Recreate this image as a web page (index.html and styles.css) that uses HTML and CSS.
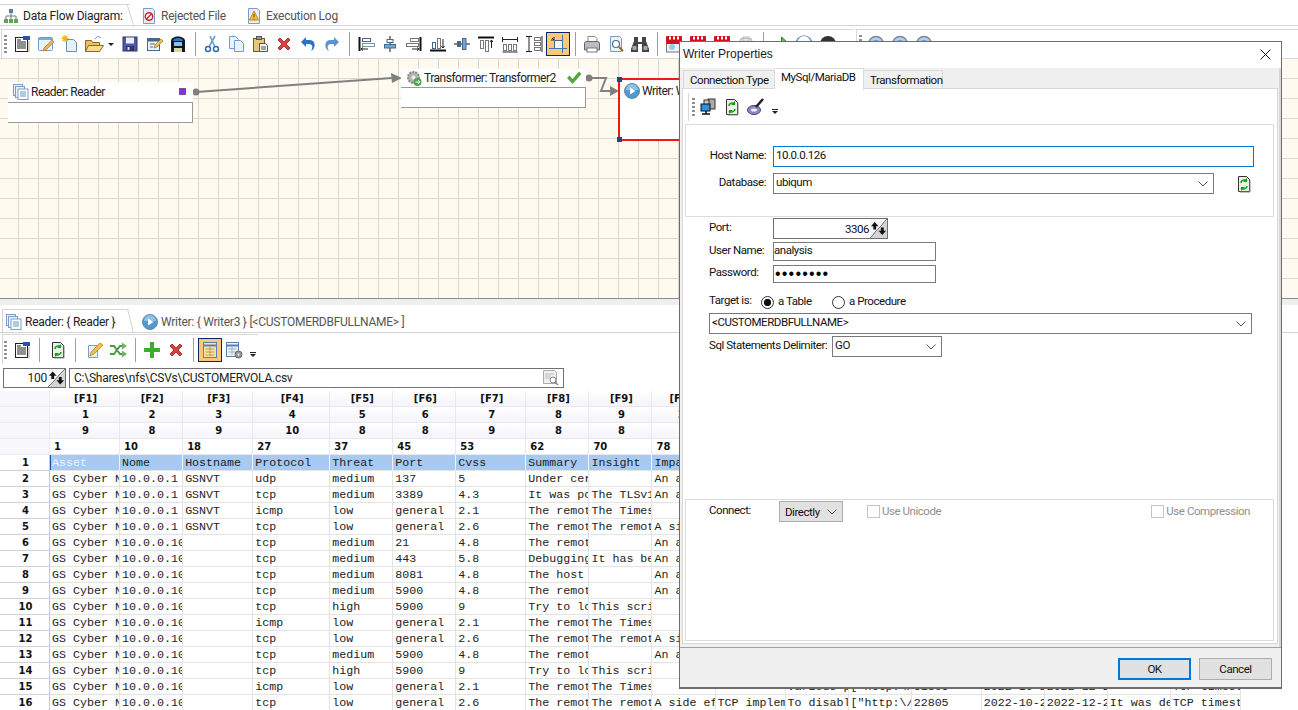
FILE: index.html
```html
<!DOCTYPE html>
<html lang="en">
<head>
  <meta charset="UTF-8" />
  <title>Data Flow Diagram</title>
  <link rel="stylesheet" href="styles.css">
</head>
<body>
  <!-- icon sheet -->
  <svg class="icon-sheet" xmlns="http://www.w3.org/2000/svg">
    <symbol id="i-org" viewBox="0 0 16 16"><rect x="6" y="1" width="4" height="4" fill="#4a7fc0"/><path d="M8 5v3M3 11V8h10v3M8 8v3" stroke="#777" fill="none"/><rect x="1" y="11" width="4" height="4" fill="#5aa84a"/><rect x="6" y="11" width="4" height="4" fill="#5aa84a"/><rect x="11" y="11" width="4" height="4" fill="#5aa84a"/></symbol>
    <symbol id="i-rejected" viewBox="0 0 16 16"><path d="M2.500 .5h9l2 2v13h-11z" fill="#e8eef8" stroke="#7d9cc8"/><circle cx="8" cy="8.500" r="3.700" fill="#fff" stroke="#d2242a" stroke-width="1.500"/><path d="M5.500 11l5-5" stroke="#d2242a" stroke-width="1.500"/></symbol>
    <symbol id="i-log" viewBox="0 0 16 16"><path d="M2.500 .5h9l2 2v13h-11z" fill="#e8eef8" stroke="#7d9cc8"/><path d="M8 3l4.500 9h-9z" fill="#f5c83c" stroke="#c08a10"/><path d="M8 6v3.500M8 10.500v1" stroke="#7a3a00"/></symbol>
    <symbol id="i-props" viewBox="0 0 20 20"><rect x="3.500" y="3.500" width="12" height="14" fill="#fff" stroke="#222"/><path d="M5 6h4M5 8h9M5 10h9M5 12h9M5 14h9" stroke="#222"/><rect x="11" y="2" width="7" height="4" fill="#2a52a8"/><path d="M16 7h2v11h-2z" fill="#d8d0c0"/></symbol>
    <symbol id="i-edit" viewBox="0 0 20 20"><rect x="2.500" y="3.500" width="14" height="13" rx="1" fill="#eaf2fb" stroke="#6f9bd0"/><path d="M3 4h13v2H3z" fill="#7fa8dc"/><path d="M7 17l1-3 8-8 2 2-8 8z" fill="#f2b04a" stroke="#b87a20" stroke-width=".7"/></symbol>
    <symbol id="i-new" viewBox="0 0 20 20"><path d="M6.500 5.500h7l3 3v9h-10z" fill="#e4f0fb" stroke="#6f8fb0"/><path d="M5 1v7M1.500 4.500h7M2.500 2l5 5M7.500 2l-5 5" stroke="#f0b020" stroke-width="1.200"/></symbol>
    <symbol id="i-open" viewBox="0 0 20 20"><path d="M1.500 17.500V6.500h6l1 2h7v9z" fill="#e8c060" stroke="#8a6a20"/><path d="M1.500 17.500l3-6h15l-4 6z" fill="#f6dc90" stroke="#8a6a20"/><path d="M11 5c2-3 4-3 6-1" stroke="#6f8fb0" fill="none"/></symbol>
    <symbol id="i-save" viewBox="0 0 20 20"><rect x="3" y="3" width="14" height="14" fill="#5058a8" stroke="#30346c"/><rect x="6" y="3.500" width="8" height="6" fill="#eef"/><rect x="6" y="12" width="8" height="5" fill="#30346c"/><rect x="7.500" y="13" width="2" height="3" fill="#dde"/></symbol>
    <symbol id="i-saveas" viewBox="0 0 20 20"><rect x="3.500" y="4.500" width="12" height="12" fill="#eef2f8" stroke="#46688c"/><path d="M3.500 4.500h12v3h-12z" fill="#46688c"/><path d="M6 10h5M6 13h3" stroke="#46688c"/><path d="M10 14l1-3 6-6 2 2-6 6z" fill="#f2c04a" stroke="#8a6a20" stroke-width=".6"/></symbol>
    <symbol id="i-dbsave" viewBox="0 0 20 20"><path d="M3 7c0-6 14-6 14 0v11H3z" fill="#101820"/><path d="M5 7c0-4 10-4 10 0z" fill="#2a78c8"/><rect x="6" y="8" width="8" height="4" fill="#8cc0ee"/><rect x="6" y="14" width="8" height="4" fill="#d8d8a0"/></symbol>
    <symbol id="i-cut" viewBox="0 0 20 20"><path d="M13 2L7 13M8 2l5 11" stroke="#6d9fcc" stroke-width="1.600"/><circle cx="6" cy="15" r="2.500" fill="none" stroke="#2f6cb0" stroke-width="1.500"/><circle cx="14" cy="15" r="2.500" fill="none" stroke="#2f6cb0" stroke-width="1.500"/></symbol>
    <symbol id="i-copy" viewBox="0 0 20 20"><path d="M3.500 2.500h6l3 3v9h-9z" fill="#eaf2fb" stroke="#6f9bd0"/><path d="M8.500 6.500h6l3 3v8h-9z" fill="#eaf2fb" stroke="#6f9bd0"/></symbol>
    <symbol id="i-paste" viewBox="0 0 20 20"><rect x="3.500" y="4.500" width="11" height="13" fill="#e8c878" stroke="#6a5a30"/><rect x="6.500" y="2.500" width="5" height="3" fill="#999" stroke="#555"/><path d="M9.500 9.500h6l2 2v6h-8z" fill="#f4f4f4" stroke="#555"/><path d="M11 13h5M11 15h5" stroke="#555"/></symbol>
    <symbol id="i-del" viewBox="0 0 20 20"><path d="M4 6l2-2 4 4 4-4 2 2-4 4 4 4-2 2-4-4-4 4-2-2 4-4z" fill="#d64545" stroke="#b03030"/></symbol>
    <symbol id="i-undo" viewBox="0 0 20 20"><path d="M7 5h4c6 0 6 9 1 11 2-3 2-7-2-7H7v3L2 7l5-5z" fill="#2f73c0" transform="translate(1 1)"/></symbol>
    <symbol id="i-redo" viewBox="0 0 20 20"><path d="M13 5H9c-6 0-6 9-1 11-2-3-2-7 2-7h3v3l5-5-5-5z" fill="#5a93d4" transform="translate(-1 1)"/></symbol>
    <symbol id="i-al" viewBox="0 0 20 20"><path d="M3.500 3v14" stroke="#111" stroke-width="2"/><rect x="6.500" y="4.500" width="8" height="3" fill="#fff" stroke="#46688c"/><rect x="6.500" y="9.500" width="12" height="3" fill="#fff" stroke="#46688c" opacity=".7"/><path d="M5 15h7M5 15l2-1.500M5 15l2 1.500" stroke="#222" fill="none"/></symbol>
    <symbol id="i-ac" viewBox="0 0 20 20"><path d="M10 2v16" stroke="#111"/><rect x="7" y="5.500" width="6" height="3" fill="#fff" stroke="#46688c"/><rect x="4.500" y="10.500" width="11" height="3.500" fill="#7ba5d4" stroke="#46688c"/></symbol>
    <symbol id="i-ar" viewBox="0 0 20 20"><path d="M16.500 3v14" stroke="#111" stroke-width="2"/><rect x="6.500" y="4.500" width="8" height="3" fill="#fff" stroke="#777"/><rect x="2.500" y="9.500" width="12" height="3" fill="#fff" stroke="#777"/><path d="M8 15h7M15 15l-2-1.500M15 15l-2 1.500" stroke="#222" fill="none"/></symbol>
    <symbol id="i-ab" viewBox="0 0 20 20"><path d="M2 16.500h16" stroke="#111" stroke-width="2"/><rect x="4.500" y="8.500" width="3" height="6" fill="#fff" stroke="#46688c"/><rect x="9.500" y="4.500" width="3" height="10" fill="#fff" stroke="#777"/><path d="M15 5v9M15 14l-1.500-2M15 14l1.500-2" stroke="#222" fill="none"/></symbol>
    <symbol id="i-am" viewBox="0 0 20 20"><path d="M2 10h16" stroke="#111"/><rect x="5.500" y="7.500" width="3" height="5" fill="#46688c" stroke="#46688c"/><rect x="10.500" y="4.500" width="3.500" height="11" fill="#7ba5d4" stroke="#46688c"/></symbol>
    <symbol id="i-at" viewBox="0 0 20 20"><path d="M2 3.500h16" stroke="#111" stroke-width="2"/><rect x="4.500" y="6.500" width="3" height="8" fill="#fff" stroke="#777"/><rect x="9.500" y="6.500" width="3" height="11" fill="#fff" stroke="#777"/><path d="M15.500 14V6M15.500 6L14 8M15.500 6L17 8" stroke="#222" fill="none"/></symbol>
    <symbol id="i-eh" viewBox="0 0 20 20"><path d="M2.500 3v5M17.500 3v5M3 5.500h14" stroke="#222"/><rect x="3.500" y="10.500" width="3" height="6" fill="#fff" stroke="#777"/><rect x="8.500" y="10.500" width="3" height="6" fill="#fff" stroke="#777"/><rect x="13.500" y="10.500" width="3" height="6" fill="#fff" stroke="#777"/><path d="M2.500 18h15" stroke="#222"/></symbol>
    <symbol id="i-ev" viewBox="0 0 20 20"><path d="M2 2.500h6M2 17.500h6M5 3v14" stroke="#222"/><rect x="10.500" y="3.500" width="6" height="3" fill="#fff" stroke="#777"/><rect x="10.500" y="8.500" width="6" height="3" fill="#fff" stroke="#777"/><rect x="10.500" y="13.500" width="6" height="3" fill="#fff" stroke="#777"/><path d="M18 2v16" stroke="#222"/></symbol>
    <symbol id="i-fit" viewBox="0 0 20 20"><rect x="6.500" y="6.500" width="8" height="8" fill="#f4f4f4" stroke="#46688c"/><path d="M1 14.500h18M14.500 1v18" stroke="#3f76b8"/><path d="M3 6h3M6 3v3M4 4l2 2" stroke="#222"/></symbol>
    <symbol id="i-print" viewBox="0 0 20 20"><path d="M6 2.500h7l2 2v5H6z" fill="#fff" stroke="#888"/><path d="M2.500 10c0-2 1-2.500 2-2.500h11c1 0 2 .5 2 2.500v6h-15z" fill="#b8bcc4" stroke="#666"/><rect x="5" y="14" width="10" height="4" fill="#fff" stroke="#777"/></symbol>
    <symbol id="i-preview" viewBox="0 0 20 20"><path d="M4.500 2.500h9l2 2v13h-11z" fill="#eaf2fb" stroke="#7d9cc8"/><circle cx="10" cy="10" r="3.500" fill="#fff" stroke="#5a6a80" stroke-width="1.200"/><path d="M13 13l4 4" stroke="#8a6a20" stroke-width="2"/></symbol>
    <symbol id="i-bino" viewBox="0 0 20 20"><path d="M4 3h4v5h4V3h4v4l3 8v3h-7V10H8v8H1v-3l3-8z" fill="#444"/><rect x="2.500" y="12" width="4" height="4" fill="#a8a8a8"/><rect x="13.500" y="12" width="4" height="4" fill="#a8a8a8"/></symbol>
    <symbol id="i-cal" viewBox="0 0 20 20"><rect x="2.500" y="4" width="15" height="14" fill="#eef2f8" stroke="#777"/><rect x="2" y="2" width="16" height="8" rx="1" fill="#d60f18"/><path d="M6 2.500v3M10 2.500v3M14 2.500v3" stroke="#fff" stroke-width="2"/><circle cx="8" cy="13" r="3" fill="#9cc8ee"/></symbol>
    <symbol id="i-gray" viewBox="0 0 20 20"><rect x="4.500" y="4.500" width="11" height="13" rx="2" fill="#f4f4f4" stroke="#bbb" stroke-width="1.500"/><rect x="7" y="3" width="6" height="4" fill="none" stroke="#bbb"/></symbol>
    <symbol id="i-run" viewBox="0 0 20 20"><path d="M2.500 7.500h9V3l7 6.500-7 6.500v-4.500h-9z" fill="#6cc060" stroke="#1a8a20"/></symbol>
    <symbol id="i-dome" viewBox="0 0 20 20"><circle cx="10" cy="10" r="8" fill="#dbe8f8" stroke="#6f8fc0" stroke-width="1.500"/><path d="M4 8a6 6 0 0 1 12 0z" fill="#f8fbff"/></symbol>
    <symbol id="i-domedark" viewBox="0 0 20 20"><circle cx="10" cy="10" r="8" fill="#333"/></symbol>
    <symbol id="i-domeb" viewBox="0 0 20 20"><circle cx="10" cy="10" r="7.500" fill="#b8cce8" stroke="#7a8a9c" stroke-width="1.500"/><path d="M5 11a5 5 0 0 1 10 0z" fill="#6f9bd8"/></symbol>
    <symbol id="i-refresh" viewBox="0 0 20 20"><path d="M4.500 2.500h8l3 3v12h-11z" fill="#eef0e8" stroke="#333"/><path d="M7 9c0-3 4-4 6-2M13 12c0 3-4 4-6 2" stroke="#0ea018" stroke-width="1.500" fill="none"/><path d="M13 4v4h-4zM7 17v-4h4z" fill="#0ea018"/><path d="M16 6v12H6" stroke="#888" fill="none"/></symbol>
    <symbol id="i-pendoc" viewBox="0 0 20 20"><path d="M4.500 5.500h9v12h-9z" fill="#eaf2fb" stroke="#7d9cc8"/><path d="M6 16l1-4 9-9 3 2-9 9z" fill="#f2c04a" stroke="#b08020" stroke-width=".7"/></symbol>
    <symbol id="i-shuffle" viewBox="0 0 20 20"><path d="M2 6h4l6 8h3M2 14h4l6-8h3" stroke="#4a9a44" stroke-width="2" fill="none"/><path d="M14 2.500L19 6l-5 3.500zM14 10.500l5 3.500-5 3.500z" fill="#6cb860"/></symbol>
    <symbol id="i-plus" viewBox="0 0 20 20"><path d="M8 2h4v6h6v4h-6v6H8v-6H2V8h6z" fill="#3eaa2e"/></symbol>
    <symbol id="i-table" viewBox="0 0 20 20"><rect x="3.500" y="2.500" width="13" height="15" fill="#fbe3a8" stroke="#5d7eb0"/><path d="M3.500 5.500h13" stroke="#5d7eb0" stroke-width="2"/><path d="M5.500 9h9M5.500 12h9M5.500 15h9M10 7v9" stroke="#c09a50"/></symbol>
    <symbol id="i-tablegear" viewBox="0 0 20 20"><rect x="2.500" y="2.500" width="12" height="14" fill="#eef2f8" stroke="#5d7eb0"/><path d="M2.500 5.500h12" stroke="#5d7eb0" stroke-width="2"/><path d="M4.500 9h8M4.500 12h8M8 7v8" stroke="#9cb0cc"/><circle cx="14.500" cy="14.500" r="3.500" fill="#9a9a9a" stroke="#666"/><circle cx="14.500" cy="14.500" r="1" fill="#eee"/></symbol>
    <symbol id="i-network" viewBox="0 0 20 20"><rect x="10" y="2" width="7" height="10" fill="#aaa" stroke="#333"/><rect x="6" y="3" width="5" height="7" fill="#ccc" stroke="#333"/><rect x="3" y="7" width="9" height="7" fill="#2f8fe0" stroke="#111"/><path d="M4 17h8M8 14v3" stroke="#111" stroke-width="1.500"/></symbol>
    <symbol id="i-brush" viewBox="0 0 20 20"><ellipse cx="8" cy="13" rx="6.500" ry="4.500" fill="#8a8ad0" stroke="#445"/><ellipse cx="8" cy="13" rx="3" ry="1.500" fill="#eef"/><path d="M10 10l7-8" stroke="#222" stroke-width="2.500"/></symbol>
    <symbol id="i-reader" viewBox="0 0 16 16"><rect x=".5" y=".5" width="9" height="11" fill="#eaf2fb" stroke="#7d9cc8"/><rect x="2.500" y="2.500" width="9" height="11" fill="#eaf2fb" stroke="#7d9cc8"/><rect x="5" y="5" width="10" height="10.500" fill="#fff" stroke="#7d9cc8"/><path d="M7 8h6M7 10h6M7 12h6" stroke="#52a0c8"/></symbol>
    <symbol id="i-gear" viewBox="0 0 16 16"><circle cx="7.500" cy="7.500" r="5.500" fill="#b4b4b4" stroke="#888" stroke-width="2" stroke-dasharray="2 1"/><circle cx="7.500" cy="7.500" r="2" fill="#eee"/><circle cx="11.500" cy="12" r="4" fill="#4aa84a"/><path d="M9.500 12h4M12 10l2 2-2 2" stroke="#fff" fill="none"/></symbol>
    <symbol id="i-writer" viewBox="0 0 16 16"><circle cx="8" cy="8" r="7.500" fill="#4b9ccf" stroke="#6a8aa0"/><path d="M2 7a6 6 0 0 1 12 0z" fill="#a8d4ee" opacity=".7"/><path d="M6 4.500L11.500 8 6 11.500z" fill="#fff"/></symbol>
    <symbol id="i-check" viewBox="0 0 16 16"><path d="M1 8l2.500-2.500L6.500 9 13 1.500 15.500 4 6.500 14z" fill="#56a83c"/></symbol>
    <symbol id="i-chev" viewBox="0 0 10 6"><path d="M.5.500L5 5 9.500.500" fill="none" stroke="#555"/></symbol>
    <symbol id="i-spin" viewBox="0 0 18 18"><path d="M5 2L1 6.500h2.500V10h3V6.500H9zM13 16l4-4.500h-2.500V8h-3v3.500H9z" fill="#111"/></symbol>
    <symbol id="i-fileicon" viewBox="0 0 18 18"><path d="M1.500 1.500h11l2 2v11h-13z" fill="#f0f0f0" stroke="#aaa"/><path d="M3 5h9M3 7h6M3 9h5" stroke="#bbb"/><circle cx="11" cy="11" r="3" fill="#fff" stroke="#888"/><path d="M13 13l3 3" stroke="#888" stroke-width="1.500"/></symbol>
  </svg>

  <div class="app">
    <!-- Upper tabs -->
    <div class="doc-tabs">
      <div class="doc-tab active"><svg class="ic16"><use href="#i-org"/></svg>Data Flow Diagram:</div>
      <div class="doc-tab rejected"><svg class="ic16"><use href="#i-rejected"/></svg>Rejected File</div>
      <div class="doc-tab exec"><svg class="ic16"><use href="#i-log"/></svg>Execution Log</div>
    </div>

    <!-- Main toolbar -->
    <div class="main-tools">
      <div class="toolbar first">
        <span class="grip"></span>
        <span class="tool"><svg><use href="#i-props"/></svg></span>
        <span class="tool"><svg><use href="#i-edit"/></svg></span>
        <span class="tool"><svg><use href="#i-new"/></svg></span>
        <span class="tool"><svg><use href="#i-open"/></svg></span>
        <span class="drop"></span>
        <span class="tool"><svg><use href="#i-save"/></svg></span>
        <span class="tool"><svg><use href="#i-saveas"/></svg></span>
        <span class="tool"><svg><use href="#i-dbsave"/></svg></span>
        <span class="sep"></span>
        <span class="tool"><svg><use href="#i-cut"/></svg></span>
        <span class="tool"><svg><use href="#i-copy"/></svg></span>
        <span class="tool"><svg><use href="#i-paste"/></svg></span>
        <span class="tool"><svg><use href="#i-del"/></svg></span>
        <span class="tool"><svg><use href="#i-undo"/></svg></span>
        <span class="tool"><svg><use href="#i-redo"/></svg></span>
        <span class="sep"></span>
        <span class="tool"><svg><use href="#i-al"/></svg></span>
        <span class="tool"><svg><use href="#i-ac"/></svg></span>
        <span class="tool"><svg><use href="#i-ar"/></svg></span>
        <span class="tool"><svg><use href="#i-ab"/></svg></span>
        <span class="tool"><svg><use href="#i-am"/></svg></span>
        <span class="tool"><svg><use href="#i-at"/></svg></span>
        <span class="tool"><svg><use href="#i-eh"/></svg></span>
        <span class="tool"><svg><use href="#i-ev"/></svg></span>
        <span class="tool on"><svg><use href="#i-fit"/></svg></span>
        <span class="sep"></span>
        <span class="tool"><svg><use href="#i-print"/></svg></span>
        <span class="tool"><svg><use href="#i-preview"/></svg></span>
        <span class="tool"><svg><use href="#i-bino"/></svg></span>
        <span class="sep"></span>
        <span class="tool"><svg><use href="#i-cal"/></svg></span>
        <span class="tool"><svg><use href="#i-cal"/></svg></span>
        <span class="tool"><svg><use href="#i-cal"/></svg></span>
        <span class="tool"><svg><use href="#i-gray"/></svg></span>
        <span class="sep"></span>
        <span class="tool"><svg><use href="#i-run"/></svg></span>
        <span class="tool"><svg><use href="#i-dome"/></svg></span>
        <span class="tool"><svg><use href="#i-domedark"/></svg></span>
      </div>
      <div class="toolbar second">
        <span class="grip"></span>
        <span class="tool"><svg><use href="#i-domeb"/></svg></span>
        <span class="tool"><svg><use href="#i-domeb"/></svg></span>
        <span class="tool"><svg><use href="#i-domeb"/></svg></span>
      </div>
    </div>

    <!-- Diagram -->
    <div class="canvas">
      <svg class="wires" xmlns="http://www.w3.org/2000/svg">
        <path d="M196 34L392 20" stroke="#808080" stroke-width="2" fill="none"/>
        <path d="M391 15l11 5-10 5z" fill="#808080"/>
        <circle cx="196" cy="34" r="3.500" fill="#808080"/>
        <circle cx="589" cy="20" r="3.500" fill="#808080"/>
        <path d="M589 20h17l-5 13h10" stroke="#808080" stroke-width="2" fill="none"/>
        <path d="M610 28l9 5-9 5z" fill="#808080"/>
      </svg>

      <div class="node reader-node">
        <div class="node-head"><svg class="ic16"><use href="#i-reader"/></svg><span class="node-name">Reader: Reader</span><span class="node-flag"></span></div>
        <div class="node-body"></div>
      </div>
      <div class="node trans-node">
        <div class="node-head"><svg class="ic16"><use href="#i-gear"/></svg><span class="node-name">Transformer: Transformer2</span><svg class="ic16 node-ok"><use href="#i-check"/></svg></div>
        <div class="node-body"></div>
      </div>
      <div class="node writer-node">
        <div class="node-head"><svg class="ic16"><use href="#i-writer"/></svg><span class="node-name">Writer: Writer3</span></div>
        <span class="handle tl"></span>
        <span class="handle bl"></span>
      </div>
    </div>

    <div class="splitter"></div>

    <!-- Lower pane -->
    <div class="pane-tabs">
      <div class="pane-tab active"><svg class="ic16"><use href="#i-reader"/></svg>Reader: { Reader }</div>
      <div class="pane-tab"><svg class="ic16"><use href="#i-writer"/></svg>Writer: { Writer3 } [&lt;CUSTOMERDBFULLNAME&gt; ]</div>
    </div>

    <div class="toolbar pane-tools">
      <span class="grip"></span>
      <span class="tool"><svg><use href="#i-props"/></svg></span>
      <span class="sep narrow"></span>
      <span class="tool"><svg><use href="#i-refresh"/></svg></span>
      <span class="sep narrow"></span>
      <span class="tool"><svg><use href="#i-pendoc"/></svg></span>
      <span class="tool"><svg><use href="#i-shuffle"/></svg></span>
      <span class="sep"></span>
      <span class="tool"><svg><use href="#i-plus"/></svg></span>
      <span class="tool"><svg><use href="#i-del"/></svg></span>
      <span class="sep"></span>
      <span class="tool on"><svg><use href="#i-table"/></svg></span>
      <span class="tool"><svg><use href="#i-tablegear"/></svg></span>
      <span class="overflow"></span>
    </div>

    <div class="file-row">
      <div class="spin-box small"><span class="spin-val">100</span><span class="spin-btn"><svg><use href="#i-spin"/></svg></span></div>
      <div class="path-box"><span>C:\Shares\nfs\CSVs\CUSTOMERVOLA.csv</span><svg><use href="#i-fileicon"/></svg></div>
    </div>

    <table class="grid">
      <colgroup>
        <col class="w50"><col class="w70"><col class="w63"><col class="w70"><col class="w77"><col class="w63"><col class="w63"><col class="w70"><col class="w63"><col class="w63"><col class="w63">
        <col class="w70"><col class="w63"><col class="w63"><col class="w70"><col class="w63"><col class="w63"><col class="w63"><col class="w70">
      </colgroup>
      <tr class="hd"><th></th><th>[F1]</th><th>[F2]</th><th>[F3]</th><th>[F4]</th><th>[F5]</th><th>[F6]</th><th>[F7]</th><th>[F8]</th><th>[F9]</th><th>[F10]</th></tr>
      <tr class="hd"><th></th><th>1</th><th>2</th><th>3</th><th>4</th><th>5</th><th>6</th><th>7</th><th>8</th><th>9</th><th>10</th></tr>
      <tr class="hd"><th></th><th>9</th><th>8</th><th>9</th><th>10</th><th>8</th><th>8</th><th>9</th><th>8</th><th>8</th><th>8</th></tr>
      <tr class="hd offs"><th></th><th>1</th><th>10</th><th>18</th><th>27</th><th>37</th><th>45</th><th>53</th><th>62</th><th>70</th><th>78</th></tr>
      <tr class="picked"><th>1</th><td class="focus">Asset</td><td>Nome</td><td>Hostname</td><td>Protocol</td><td>Threat</td><td>Port</td><td>Cvss</td><td>Summary</td><td>Insight</td><td>Impact</td></tr>
      <tr><th>2</th><td>GS Cyber N</td><td>10.0.0.1</td><td>GSNVT</td><td>udp</td><td>medium</td><td>137</td><td>5</td><td>Under cer</td><td></td><td>An a</td></tr>
      <tr><th>3</th><td>GS Cyber N</td><td>10.0.0.1</td><td>GSNVT</td><td>tcp</td><td>medium</td><td>3389</td><td>4.3</td><td>It was po</td><td>The TLSv1</td><td>An a</td></tr>
      <tr><th>4</th><td>GS Cyber N</td><td>10.0.0.1</td><td>GSNVT</td><td>icmp</td><td>low</td><td>general</td><td>2.1</td><td>The remot</td><td>The Times</td><td></td></tr>
      <tr><th>5</th><td>GS Cyber N</td><td>10.0.0.1</td><td>GSNVT</td><td>tcp</td><td>low</td><td>general</td><td>2.6</td><td>The remot</td><td>The remot</td><td>A si</td></tr>
      <tr><th>6</th><td>GS Cyber N</td><td>10.0.0.10</td><td></td><td>tcp</td><td>medium</td><td>21</td><td>4.8</td><td>The remot</td><td></td><td>An a</td></tr>
      <tr><th>7</th><td>GS Cyber N</td><td>10.0.0.10</td><td></td><td>tcp</td><td>medium</td><td>443</td><td>5.8</td><td>Debugging</td><td>It has be</td><td>An a</td></tr>
      <tr><th>8</th><td>GS Cyber N</td><td>10.0.0.10</td><td></td><td>tcp</td><td>medium</td><td>8081</td><td>4.8</td><td>The host</td><td></td><td>An a</td></tr>
      <tr><th>9</th><td>GS Cyber N</td><td>10.0.0.10</td><td></td><td>tcp</td><td>medium</td><td>5900</td><td>4.8</td><td>The remot</td><td></td><td>An a</td></tr>
      <tr><th>10</th><td>GS Cyber N</td><td>10.0.0.10</td><td></td><td>tcp</td><td>high</td><td>5900</td><td>9</td><td>Try to lo</td><td>This scri</td><td></td></tr>
      <tr><th>11</th><td>GS Cyber N</td><td>10.0.0.10</td><td></td><td>icmp</td><td>low</td><td>general</td><td>2.1</td><td>The remot</td><td>The Times</td><td></td></tr>
      <tr><th>12</th><td>GS Cyber N</td><td>10.0.0.10</td><td></td><td>tcp</td><td>low</td><td>general</td><td>2.6</td><td>The remot</td><td>The remot</td><td>A si</td></tr>
      <tr><th>13</th><td>GS Cyber N</td><td>10.0.0.10</td><td></td><td>tcp</td><td>medium</td><td>5900</td><td>4.8</td><td>The remot</td><td></td><td>An a</td></tr>
      <tr><th>14</th><td>GS Cyber N</td><td>10.0.0.10</td><td></td><td>tcp</td><td>high</td><td>5900</td><td>9</td><td>Try to lo</td><td>This scri</td><td></td></tr>
      <tr><th>15</th><td>GS Cyber N</td><td>10.0.0.10</td><td></td><td>icmp</td><td>low</td><td>general</td><td>2.1</td><td>The remot</td><td>The Times</td><td></td><td></td><td>Various p</td><td>["http:\/</td><td>51805</td><td>2022-10-2</td><td>2022-12-2</td><td></td><td>TCP timest</td></tr>
      <tr><th>16</th><td>GS Cyber N</td><td>10.0.0.10</td><td></td><td>tcp</td><td>low</td><td>general</td><td>2.6</td><td>The remot</td><td>The remot</td><td>A side ef</td><td>TCP implem</td><td>To disabl</td><td>["http:\/</td><td>22805</td><td>2022-10-2</td><td>2022-12-2</td><td>It was de</td><td>TCP timest</td></tr>
    </table>
  </div>

  <!-- Writer Properties dialog -->
  <div class="dialog">
    <div class="dlg-title">
      <span>Writer Properties</span>
      <svg class="dlg-close" viewBox="0 0 11 11"><path d="M.5.500l10 10M10.500.500l-10 10" stroke="#111" fill="none"/></svg>
    </div>
    <div class="dlg-tabs">
      <span class="dlg-tab t-conn">Connection Type</span>
      <span class="dlg-tab t-mysql active">MySql/MariaDB</span>
      <span class="dlg-tab t-trans">Transformation</span>
    </div>
    <div class="dlg-panel">
      <div class="toolbar dlg-tools">
        <span class="grip"></span>
        <span class="tool"><svg><use href="#i-network"/></svg></span>
        <span class="tool"><svg><use href="#i-refresh"/></svg></span>
        <span class="tool"><svg><use href="#i-brush"/></svg></span>
        <span class="overflow"></span>
      </div>

      <div class="box host-box">
        <div class="host-row">
          <label class="host-label">Host Name:</label>
          <div class="field focus-field w-host">10.0.0.126</div>
        </div>
        <div class="host-row">
          <label class="host-label">Database:</label>
          <div class="field combo w-db"><span>ubiqum</span><svg><use href="#i-chev"/></svg></div>
          <svg class="db-refresh"><use href="#i-refresh"/></svg>
        </div>
      </div>

      <div class="conn-form">
        <div class="conn-row port-row">
          <label>Port:</label>
          <div class="spin-box port"><span class="spin-val">3306</span><span class="spin-btn"><svg><use href="#i-spin"/></svg></span></div>
        </div>
        <div class="conn-row user-row">
          <label>User Name:</label>
          <div class="field tight w-cred">analysis</div>
        </div>
        <div class="conn-row pass-row">
          <label>Password:</label>
          <div class="field tight w-cred dots">••••••••</div>
        </div>
        <div class="conn-row target-row">
          <label class="target-label">Target is:</label>
          <span class="radio checked"></span><span class="radio-text">a Table</span>
          <span class="radio second-radio"></span><span class="radio-text">a Procedure</span>
        </div>
        <div class="field combo w-target"><span>&lt;CUSTOMERDBFULLNAME&gt;</span><svg><use href="#i-chev"/></svg></div>
        <div class="conn-row delim-row">
          <label class="delim-label">Sql Statements Delimiter:</label>
          <div class="field combo w-delim"><span>GO</span><svg><use href="#i-chev"/></svg></div>
        </div>
      </div>

      <div class="box connect-box">
        <label class="connect-label">Connect:</label>
        <div class="field combo gray w-connect"><span>Directly</span><svg><use href="#i-chev"/></svg></div>
        <span class="check"></span><span class="check-text">Use Unicode</span>
        <span class="check push"></span><span class="check-text">Use Compression</span>
      </div>
    </div>
    <div class="dlg-foot">
      <button type="button" class="default">OK</button>
      <button type="button">Cancel</button>
    </div>
  </div>
</body>
</html>
```
FILE: styles.css
```css
* {
  box-sizing: border-box;
}

html, body {
  margin: 0;
  height: 710px;
  overflow: hidden;
}

body {
  position: relative;
  background: #fff;
  color: #222;
  font-family: Roboto, "Liberation Sans", Arial, sans-serif;
  font-size: 12px;
  letter-spacing: -0.25px;
}

.icon-sheet {
  display: none;
}

.ic16 {
  width: 16px;
  height: 16px;
  flex: none;
}

/* upper tabs */
.doc-tabs {
  display: flex;
  height: 26px;
  border-bottom: 1px solid #d4d4d4;
  padding-top: 4px;
}

.doc-tab {
  display: flex;
  align-items: center;
  gap: 4px;
  color: #555;
  height: 21px;
  padding-top: 2px;
}

.doc-tab.active {
  position: relative;
  width: 130px;
  padding-left: 3px;
  color: #222;
  border-top: 1px solid #d4d4d4;
}

.doc-tab.active::after {
  content: "";
  position: absolute;
  right: -1px;
  top: -1px;
  height: 23px;
  width: 1px;
  background: #d4d4d4;
  transform: skewX(17deg);
}

.doc-tab.rejected {
  margin-left: 11px;
}

.doc-tab.exec {
  margin-left: 20px;
}

/* toolbars */
.main-tools {
  display: flex;
  height: 32px;
  padding-top: 3px;
}

.toolbar {
  display: flex;
  align-items: center;
  height: 29px;
  border-top: 1px solid #d8d8d8;
}

.toolbar.first {
  width: 854px;
  margin-left: 1px;
  border-left: 1px solid #d8d8d8;
}

.toolbar.second {
  flex: 1;
  margin-left: 1px;
  border-left: 1px solid #d8d8d8;
}

.toolbar.second .grip {
  margin-left: 2px;
  margin-right: 2px;
}

.grip {
  width: 3px;
  height: 20px;
  margin: 0 5px 0 0;
  flex: none;
  background: radial-gradient(circle, #8a8a8a 1.1px, transparent 1.3px) 0 0 / 3px 4px repeat-y;
}

.first .grip {
  margin-left: 2px;
  margin-right: 3px;
}

.tool {
  display: flex;
  align-items: center;
  justify-content: center;
  width: 24px;
  height: 24px;
  flex: none;
}

.tool svg {
  width: 20px;
  height: 20px;
}

.tool.on {
  background: #fbc878;
  border: 1px solid #0a246a;
}

.sep {
  width: 10px;
  height: 24px;
  flex: none;
  margin: 0;
  background: linear-gradient(#a0a0a0, #a0a0a0) 5px 0 / 1px 100% no-repeat;
}

.sep.narrow {
  width: 12px;
}

.drop {
  width: 12px;
  height: 24px;
  flex: none;
  position: relative;
}

.drop::after {
  content: "";
  position: absolute;
  left: 2px;
  top: 11px;
  border: 3px solid transparent;
  border-top: 3px solid #222;
}

.overflow {
  width: 14px;
  height: 24px;
  flex: none;
  position: relative;
}

.overflow::before {
  content: "";
  position: absolute;
  left: 4px;
  top: 14px;
  width: 6px;
  height: 1px;
  background: #222;
}

.overflow::after {
  content: "";
  position: absolute;
  left: 4px;
  top: 16px;
  border: 3px solid transparent;
  border-top: 3px solid #222;
}

/* diagram */
.canvas {
  position: relative;
  height: 240px;
  background-color: #fefaef;
  background-image: linear-gradient(#d9d9d4 1px, transparent 1px), linear-gradient(90deg, #d9d9d4 1px, transparent 1px);
  background-size: 20px 20px;
  background-position: 18px 0;
}

.wires {
  position: absolute;
  left: 0;
  top: 0;
  width: 700px;
  height: 120px;
}

.node {
  position: absolute;
  width: 185px;
}

.reader-node {
  left: 8px;
  top: 24px;
}

.trans-node {
  left: 401px;
  top: 11px;
}

.writer-node {
  left: 618px;
  top: 20px;
  height: 63px;
  background: #fff;
  border: 2px solid #f01818;
}

.node-head {
  display: flex;
  align-items: center;
  gap: 2px;
  height: 20px;
  padding-left: 5px;
  padding-bottom: 1px;
  background: #fff;
  color: #222;
}

.trans-node .node-head {
  height: 18px;
  padding-left: 5px;
  gap: 2px;
}

.writer-node .node-head {
  height: 22px;
  padding-left: 4px;
}

.node-name {
  flex: 1;
  white-space: nowrap;
  letter-spacing: -0.5px;
}

.node-flag {
  width: 7px;
  height: 7px;
  margin-right: 7px;
  background: #8a2be2;
  border: 1px solid #6a5a90;
}

.node-ok {
  margin-right: 4px;
}

.node-body {
  height: 21px;
  background: #fff;
  border: 1px solid #999;
  border-width: 1px 1px 1px 0;
}

.handle {
  position: absolute;
  left: -3px;
  width: 5px;
  height: 5px;
  background: #0a4aa0;
}

.handle.tl {
  top: -3px;
}

.handle.bl {
  bottom: -3px;
}

.splitter {
  height: 7px;
  background: #efefef;
  border-top: 1px solid #8c8c8c;
}

/* lower pane */
.pane-tabs {
  display: flex;
  height: 28px;
  padding-top: 4px;
  border-bottom: 1px solid #d4d4d4;
}

.pane-tab {
  display: flex;
  align-items: center;
  gap: 3px;
  height: 23px;
  padding-top: 2px;
  margin-left: 13px;
  color: #555;
}

.pane-tab.active {
  position: relative;
  width: 127px;
  margin-left: 2px;
  padding-left: 3px;
  gap: 3px;
  color: #222;
  border-top: 1px solid #d4d4d4;
  border-left: 1px solid #d4d4d4;
}

.pane-tab.active::after {
  content: "";
  position: absolute;
  right: -2px;
  top: -1px;
  height: 24px;
  width: 1px;
  background: #d4d4d4;
  transform: skewX(14deg);
}

.pane-tools {
  width: 256px;
  height: 30px;
  margin: 1px 0 0 2px;
  border-left: 1px solid #d8d8d8;
}

.pane-tools .grip {
  margin-left: 1px;
  margin-right: 3px;
}

.file-row {
  display: flex;
  gap: 3px;
  height: 20px;
  margin: 4px 0 3px 3px;
}

.spin-box {
  display: flex;
  align-items: center;
  justify-content: flex-end;
  border: 1px solid #707070;
  background: #fff;
}

.spin-box.small {
  width: 63px;
}

.spin-box.port {
  width: 115px;
  height: 21px;
}

.spin-val {
  margin-right: 1px;
}

.spin-btn {
  width: 17px;
  height: 100%;
  flex: none;
  background: linear-gradient(to bottom right, #f4f4f4 48%, #777 49%, #777 51%, #d4d4d4 52%);
}

.spin-btn svg {
  display: block;
  width: 100%;
  height: 100%;
}

.path-box {
  display: flex;
  align-items: center;
  justify-content: space-between;
  width: 495px;
  padding: 0 3px 0 4px;
  border: 1px solid #707070;
}

.path-box svg {
  width: 18px;
  height: 18px;
}

/* data grid */
.grid {
  width: 1241px;
  table-layout: fixed;
  border-collapse: separate;
  border-spacing: 0;
  letter-spacing: 0;
}

.w50 { width: 50px; }
.w63 { width: 63px; }
.w70 { width: 70px; }
.w77 { width: 77px; }

.grid th, .grid td {
  height: 16px;
  padding: 1px 0 0 2px;
  overflow: hidden;
  white-space: nowrap;
  line-height: 15px;
  border-right: 1px solid #e4e4e4;
  border-bottom: 1px solid #e4e4e4;
}

.grid th {
  font: bold 10px/14px "DejaVu Sans", Verdana, sans-serif;
  color: #111;
  text-align: center;
  background: #fdfdff;
}

.grid tr > th:first-child {
  border-right: 1px solid #c8c8d8;
  border-bottom: 1px solid #d0d0e0;
  background: #fff;
}

.grid tr.hd > th:first-child {
  background: #f8f8fc;
  border-bottom-color: #ececf2;
  border-right-color: #ececf2;
}

.grid .hd th {
  background: linear-gradient(#fff, #f4f4fa);
  border-color: #e8e8f0;
}

.grid .offs th {
  text-align: left;
  padding-left: 4px;
  background: #fff;
}

.grid td {
  font: 11.67px/14px "Liberation Mono", "Courier New", monospace;
  color: #222;
}

.picked td {
  background: #a8caf0;
  border-right-color: #f0f4fa;
}

.picked td.focus {
  color: #eaf2ff;
  box-shadow: inset 1px 0 #1a4fa0;
}

/* dialog */
.dialog {
  position: absolute;
  left: 679px;
  top: 41px;
  width: 603px;
  height: 648px;
  display: flex;
  flex-direction: column;
  background: #f0f0f0;
  border: 1px solid #6d6d6d;
  border-bottom-width: 2px;
  box-shadow: inset -2px 0 #d8d8d8;
  color: #111;
  font-size: 11.5px;
  letter-spacing: -0.45px;
  white-space: nowrap;
}

.dlg-title {
  display: flex;
  align-items: center;
  justify-content: space-between;
  height: 26px;
  padding: 0 10px 2px 3px;
  background: #fff;
  color: #1a1a1a;
  font-family: "Liberation Sans", Arial, sans-serif;
  font-size: 12px;
  letter-spacing: 0;
}

.dlg-close {
  width: 11px;
  height: 11px;
}

.dlg-tabs {
  display: flex;
  align-items: flex-end;
  height: 21px;
  padding-left: 3px;
}

.dlg-tab {
  display: flex;
  align-items: center;
  height: 19px;
  padding-left: 6px;
  background: #f0f0f0;
  border: 1px solid #d9d9d9;
  border-bottom: 0;
  border-left-width: 0;
}

.t-conn {
  width: 92px;
  border-left-width: 1px;
}

.t-mysql {
  width: 89px;
}

.t-trans {
  width: 79px;
}

.dlg-tab.active {
  position: relative;
  z-index: 1;
  height: 22px;
  padding-bottom: 5px;
  margin-bottom: -1px;
  background: #fff;
}

.dlg-panel {
  flex: 1;
  display: flex;
  flex-direction: column;
  margin: -1px 3px 3px 2px;
  background: #fff;
  border: 1px solid #d9d9d9;
}

.dlg-tools {
  width: 100px;
  height: 28px;
  margin: 4px 0 3px 5px;
  border-top: 0;
  border-left: 1px solid #d8d8d8;
}

.dlg-tools .grip {
  margin: 0 1px 0 3px;
}

.box {
  margin: 0 3px 0 2px;
  border: 1px solid #dcdcdc;
  background: #fff;
}

.host-box {
  height: 93px;
  padding-top: 21px;
}

.host-row {
  display: flex;
  align-items: center;
  height: 21px;
  margin-bottom: 6px;
}

.host-label {
  width: 80px;
  padding-bottom: 4px;
  text-align: right;
  margin-right: 7px;
}

.field {
  display: flex;
  align-items: center;
  height: 21px;
  padding-left: 2px;
  padding-bottom: 4px;
  background: #fff;
  border: 1px solid #7a7a7a;
}

.focus-field {
  border-color: #0078d7;
}

.combo {
  justify-content: space-between;
  padding-right: 5px;
}

.combo svg {
  width: 10px;
  height: 6px;
  margin-top: 4px;
}

.w-host { width: 481px; }
.w-db { width: 441px; }
.w-cred { width: 163px; }
.w-target { width: 543px; margin-left: 26px; }
.w-delim { width: 110px; }
.w-connect { width: 64px; }

.tight {
  height: 19px;
  padding-left: 0;
}

.dots {
  color: #000;
  font-family: "Liberation Sans", Arial, sans-serif;
  font-size: 16px;
  letter-spacing: 1.2px;
  padding-left: 1px;
  padding-bottom: 1px;
}

.db-refresh {
  width: 20px;
  height: 20px;
  margin-left: 20px;
}

.conn-form {
  flex: 1;
  padding-top: 1px;
}

.conn-row {
  display: flex;
  align-items: center;
  padding-left: 26px;
}

.conn-row label {
  width: 64px;
  flex: none;
  padding-bottom: 4px;
}

.port-row {
  height: 21px;
  margin-bottom: 3px;
}

.user-row {
  height: 19px;
  margin-bottom: 4px;
}

.pass-row {
  height: 18px;
  margin-bottom: 10px;
}

.pass-row .field {
  height: 18px;
}

.target-row {
  height: 18px;
  margin-bottom: 2px;
}

.conn-row .target-label {
  width: 52px;
}

.radio {
  width: 13px;
  height: 13px;
  flex: none;
  margin-right: 4px;
  border: 1px solid #333;
  border-radius: 50%;
  background: #fff;
}

.radio.checked {
  background: radial-gradient(circle, #111 3.4px, #fff 3.9px);
}

.second-radio {
  margin-left: 0;
}

.radio-text {
  width: 54px;
  padding-bottom: 3px;
}

.delim-row {
  height: 21px;
  margin-top: 2px;
}

.conn-row .delim-label {
  width: 123px;
}

.connect-box {
  display: flex;
  align-items: flex-start;
  height: 142px;
  margin-bottom: 2px;
  padding: 1px 23px 0 23px;
}

.connect-label {
  width: 70px;
  padding-top: 2px;
}

.gray {
  background: #e1e1e1;
  border-color: #adadad;
  padding-left: 5px;
  padding-bottom: 0;
}

.gray svg {
  margin-top: 0;
}

.check {
  width: 13px;
  height: 13px;
  flex: none;
  margin: 4px 2px 0 24px;
  border: 1px solid #c4c4c4;
  background: #fff;
}

.check.push {
  margin-left: auto;
}

.check-text {
  padding-top: 3px;
  color: #909090;
}

.dlg-foot {
  display: flex;
  justify-content: flex-end;
  gap: 8px;
  height: 40px;
  padding: 10px 9px 0 0;
  background: #f0f0f0;
  border-top: 1px solid #a0a0a0;
}

button {
  width: 73px;
  height: 22px;
  padding: 0;
  font: inherit;
  letter-spacing: inherit;
  color: #111;
  background: #e1e1e1;
  border: 1px solid #adadad;
}

button.default {
  border: 2px solid #0078d7;
}
```
